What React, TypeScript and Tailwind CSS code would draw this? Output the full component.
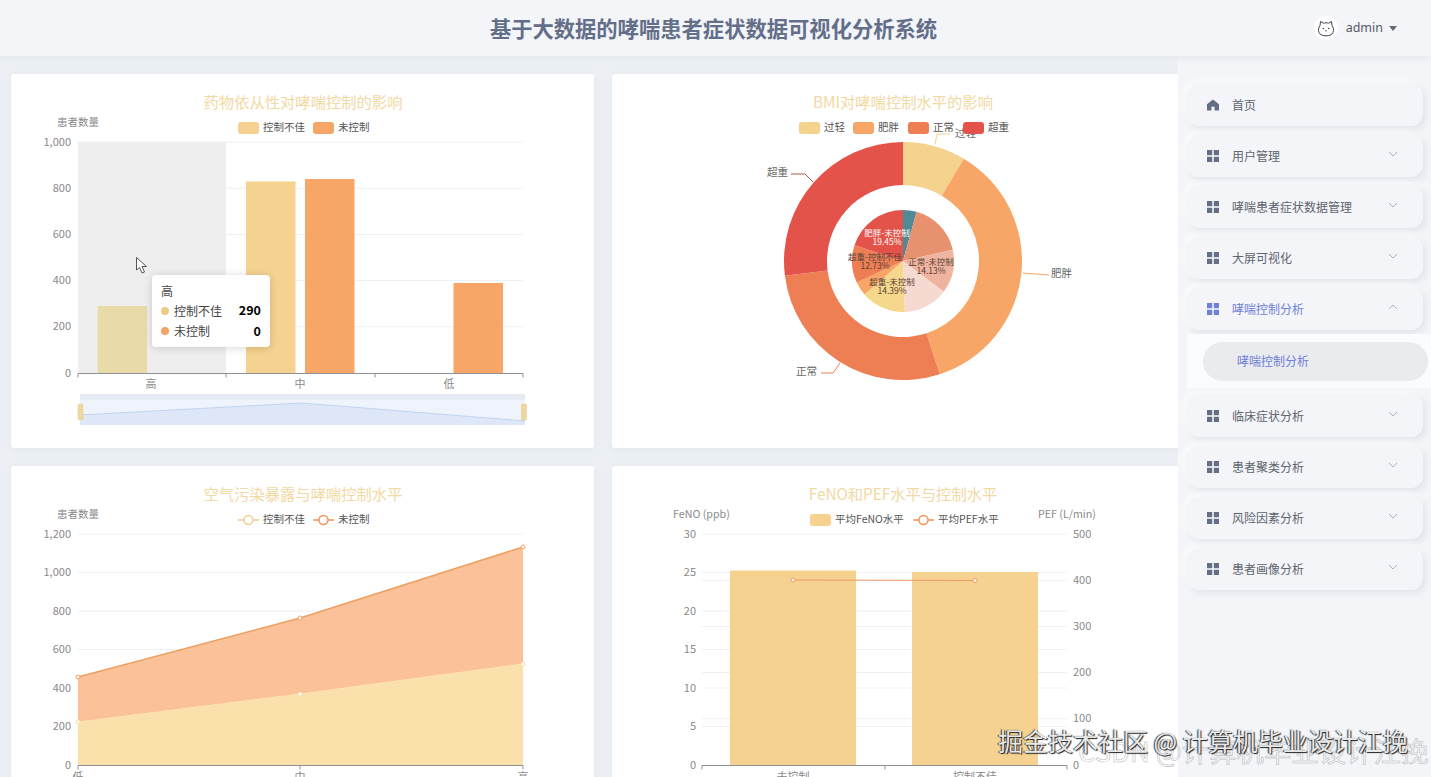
import React from "react";

const GOLD = "#f5d28f";
const ORANGE = "#f8a667";
const CORAL = "#ee7f55";
const RED = "#e4534a";

function xy(cx: number, cy: number, r: number, deg: number): [number, number] {
  const a = ((deg - 90) * Math.PI) / 180;
  return [cx + r * Math.cos(a), cy + r * Math.sin(a)];
}

function slice(cx: number, cy: number, ro: number, ri: number, a0: number, a1: number) {
  const [x0, y0] = xy(cx, cy, ro, a0);
  const [x1, y1] = xy(cx, cy, ro, a1);
  const large = a1 - a0 > 180 ? 1 : 0;
  if (ri === 0) return `M${cx} ${cy}L${x0} ${y0}A${ro} ${ro} 0 ${large} 1 ${x1} ${y1}Z`;
  const [x2, y2] = xy(cx, cy, ri, a1);
  const [x3, y3] = xy(cx, cy, ri, a0);
  return `M${x0} ${y0}A${ro} ${ro} 0 ${large} 1 ${x1} ${y1}L${x2} ${y2}A${ri} ${ri} 0 ${large} 0 ${x3} ${y3}Z`;
}

function T({
  x,
  y,
  children,
  size = 11,
  fill = "#8a8a8a",
  anchor = "start",
}: {
  x: number;
  y: number;
  children: React.ReactNode;
  size?: number;
  fill?: string;
  anchor?: "start" | "middle" | "end";
}) {
  return (
    <text x={x} y={y - 1.4} fontSize={size} fill={fill} textAnchor={anchor} dominantBaseline="central">
      {children}
    </text>
  );
}

function PieLabel({ x, y, name, pct, fill }: { x: number; y: number; name: string; pct: string; fill: string }) {
  return (
    <text x={x} y={y} fontSize={8.5} fill={fill} textAnchor="middle">
      <tspan x={x} y={y}>{name}</tspan>
      <tspan x={x} y={y + 8.5}>{pct}</tspan>
    </text>
  );
}

function Title({ x, y, children }: { x: number; y: number; children: React.ReactNode }) {
  return (
    <T x={x} y={y} size={15.3} fill="#f2d9a3" anchor="middle">
      {children}
    </T>
  );
}

function LegendBox({ x, y, color, label, w = 21 }: { x: number; y: number; color: string; label: string; w?: number }) {
  return (
    <g>
      <rect x={x} y={y - 6} width={w} height={12} rx={3} fill={color} />
      <T x={x + w + 4} y={y} size={10.5} fill="#555">
        {label}
      </T>
    </g>
  );
}

function LegendLine({ x, y, color, label }: { x: number; y: number; color: string; label: string }) {
  return (
    <g>
      <line x1={x} y1={y} x2={x + 21} y2={y} stroke={color} strokeWidth={1.5} />
      <circle cx={x + 10.5} cy={y} r={4.5} fill="#fff" stroke={color} strokeWidth={1.5} />
      <T x={x + 25} y={y} size={10.5} fill="#555">
        {label}
      </T>
    </g>
  );
}

function Grid({ ys, x1, x2 }: { ys: number[]; x1: number; x2: number }) {
  return (
    <g>
      {ys.map((y) => (
        <line key={y} x1={x1} y1={y} x2={x2} y2={y} stroke="#eef0f3" strokeWidth={1} />
      ))}
    </g>
  );
}

function Axis({ y, ticks }: { y: number; ticks: number[] }) {
  return (
    <g stroke="#8d9096" strokeWidth={1}>
      <line x1={ticks[0]} y1={y} x2={ticks[ticks.length - 1]} y2={y} />
      {ticks.map((t) => (
        <line key={t} x1={t} y1={y} x2={t} y2={y + 4} />
      ))}
    </g>
  );
}

function BarChart() {
  const ys = [373, 326.8, 280.6, 234.4, 188.2, 142];
  const labels = ["0", "200", "400", "600", "800", "1,000"];
  return (
    <svg width={583} height={374} viewBox="11 74 583 374" className="block">
      <Title x={303} y={102}>药物依从性对哮喘控制的影响</Title>
      <T x={57} y={123} size={10.5}>患者数量</T>
      <LegendBox x={238} y={128} color={GOLD} label="控制不佳" />
      <LegendBox x={313} y={128} color={ORANGE} label="未控制" />
      <rect x={78} y={142} width={148} height={231} fill="#eeeeee" />
      <Grid ys={ys.slice(1)} x1={78} x2={523} />
      {labels.map((l, i) => (
        <T key={l} x={71} y={ys[i]} anchor="end">{l}</T>
      ))}
      <rect x={97.5} y={306} width={49.5} height={67} fill="#e9dba8" />
      <rect x={246} y={181.5} width={49.5} height={191.5} fill={GOLD} />
      <rect x={305} y={179} width={49.5} height={194} fill={ORANGE} />
      <rect x={453.5} y={283} width={49.5} height={90} fill={ORANGE} />
      <Axis y={373.5} ticks={[78, 226, 375, 523]} />
      <T x={151} y={384} anchor="middle">高</T>
      <T x={300} y={384} anchor="middle">中</T>
      <T x={449} y={384} anchor="middle">低</T>
      <rect x={80} y={394} width={445} height={31} fill="#eef3fc" />
      <rect x={80} y={394} width={445} height={6} fill="#e6ebf4" />
      <path d="M80 415L302 403L525 421V425H80Z" fill="#dde7f8" stroke="none" />
      <path d="M80 415L302 403L525 421" fill="none" stroke="#c3d3ef" strokeWidth={1} />
      <rect x={78} y={404} width={5} height={16} rx={1} fill="#f0d7a0" stroke="#e3c88f" strokeWidth={0.5} />
      <rect x={521.5} y={404} width={5} height={16} rx={1} fill="#f0d7a0" stroke="#e3c88f" strokeWidth={0.5} />
      <path
        d="M136.5 257.5V270L139.5 267.5L142 273L144.5 272L142 266.5H146.5Z"
        fill="#fff"
        stroke="#555"
        strokeWidth={1}
        strokeLinejoin="round"
      />
    </svg>
  );
}

function PieChart() {
  const cx = 903;
  const cy = 261;
  const outer: [number, number, string][] = [
    [0, 30.7, "#f5d38f"],
    [30.7, 162, ORANGE],
    [162, 262.9, CORAL],
    [262.9, 360, RED],
  ];
  const inner: [number, number, string][] = [
    [0, 15.5, "#4f8a96"],
    [15.5, 77.3, "#e8916f"],
    [77.3, 127, "#efb49f"],
    [127, 178, "#f6d9d0"],
    [178, 229, "#f5d88c"],
    [229, 245, ORANGE],
    [245, 288, CORAL],
    [288, 360, RED],
  ];
  const lab = "#5a4338";
  return (
    <svg width={583} height={374} viewBox="612 74 583 374" className="block">
      <Title x={903} y={102}>BMI对哮喘控制水平的影响</Title>
      {outer.map(([a, b, c]) => (
        <path key={a} d={slice(cx, cy, 119, 76, a, b)} fill={c} />
      ))}
      {inner.map(([a, b, c]) => (
        <path key={a} d={slice(cx, cy, 51, 0, a, b)} fill={c} />
      ))}
      <g fill="none" strokeWidth={1}>
        <path d="M935 144L937 134H950" stroke="#f5d38f" />
        <path d="M791 174H805L813 182" stroke="#b5564a" />
        <path d="M1023 273L1049 275" stroke={ORANGE} />
        <path d="M821 373H833L840 363" stroke={CORAL} />
      </g>
      <T x={955} y={134} size={10.5} fill="#666">过轻</T>
      <T x={767} y={173} size={10.5} fill="#666">超重</T>
      <T x={1051} y={274} size={10.5} fill="#666">肥胖</T>
      <T x={796} y={372} size={10.5} fill="#666">正常</T>
      <LegendBox x={799} y={128} color="#f5d38f" label="过轻" />
      <LegendBox x={853} y={128} color={ORANGE} label="肥胖" />
      <LegendBox x={908} y={128} color={CORAL} label="正常" />
      <LegendBox x={963} y={128} color={RED} label="超重" />
      <PieLabel x={887} y={236} name="肥胖-未控制" pct="19.45%" fill="#fff" />
      <PieLabel x={875} y={260} name="超重-控制不佳" pct="12.73%" fill={lab} />
      <PieLabel x={931} y={265} name="正常-未控制" pct="14.13%" fill={lab} />
      <PieLabel x={892} y={285} name="超重-未控制" pct="14.39%" fill={lab} />
    </svg>
  );
}

function AreaChart() {
  const ys = [765, 726.5, 688, 649.5, 611, 572.5, 534];
  const labels = ["0", "200", "400", "600", "800", "1,000", "1,200"];
  return (
    <svg width={583} height={374} viewBox="11 466 583 374" className="block">
      <Title x={303} y={494}>空气污染暴露与哮喘控制水平</Title>
      <T x={57} y={515} size={10.5}>患者数量</T>
      <LegendLine x={238} y={520} color="#f3cd8b" label="控制不佳" />
      <LegendLine x={313} y={520} color="#ee9459" label="未控制" />
      <Grid ys={ys.slice(1)} x1={78} x2={523} />
      {labels.map((l, i) => (
        <T key={l} x={71} y={ys[i]} anchor="end">{l}</T>
      ))}
      <path d="M78 722L300 694L523 664V547L300 618L78 677Z" fill="#fbc299" />
      <path d="M78 765V722L300 694L523 664V765Z" fill="#fae0ab" />
      <path d="M78 677L300 618L523 547" fill="none" stroke="#ef9f60" strokeWidth={1.5} />
      <path d="M78 722L300 694L523 664" fill="none" stroke="#fbe2ae" strokeWidth={1} />
      {[
        [78, 677],
        [300, 618],
        [523, 547],
      ].map(([x, y]) => (
        <circle key={x} cx={x} cy={y} r={2} fill="#fff" stroke="#ef9f60" strokeWidth={1} />
      ))}
      {[
        [78, 722],
        [300, 694],
        [523, 664],
      ].map(([x, y]) => (
        <circle key={x} cx={x} cy={y} r={2} fill="#fff" stroke="#f8dc9f" strokeWidth={1} />
      ))}
      <Axis y={765.5} ticks={[78, 300, 523]} />
      <T x={78} y={777} anchor="middle">低</T>
      <T x={300} y={777} anchor="middle">中</T>
      <T x={523} y={777} anchor="middle">高</T>
    </svg>
  );
}

function ComboChart() {
  const ys = [765, 726.5, 688, 649.5, 611, 572.5, 534];
  const rs = [765, 718.8, 672.6, 626.4, 580.2, 534];
  return (
    <svg width={583} height={374} viewBox="612 466 583 374" className="block">
      <Title x={903} y={494}>FeNO和PEF水平与控制水平</Title>
      <T x={673} y={515} size={10.7}>FeNO (ppb)</T>
      <T x={1038} y={515} size={10.7}>PEF (L/min)</T>
      <LegendBox x={810} y={520} color={GOLD} label="平均FeNO水平" />
      <LegendLine x={913} y={520} color="#ee9459" label="平均PEF水平" />
      <Grid ys={[...ys.slice(1), ...rs.slice(1, 5)]} x1={702} x2={1067} />
      {ys.map((y, i) => (
        <T key={y} x={696} y={y} anchor="end">{i * 5}</T>
      ))}
      {rs.map((y, i) => (
        <T key={y} x={1073} y={y}>{i * 100}</T>
      ))}
      <rect x={730} y={570.5} width={126} height={194.5} fill={GOLD} />
      <rect x={912} y={572} width={126} height={193} fill={GOLD} />
      <path d="M793 580L975 580.5" fill="none" stroke="#ee9a6a" strokeWidth={1.2} />
      <circle cx={793} cy={580} r={2} fill="#fff" stroke="#ee9a6a" />
      <circle cx={975} cy={580.5} r={2} fill="#fff" stroke="#ee9a6a" />
      <Axis y={765.5} ticks={[702, 885, 1067]} />
      <T x={793} y={777} anchor="middle">未控制</T>
      <T x={975} y={777} anchor="middle">控制不佳</T>
    </svg>
  );
}

function Card({ children }: { children: React.ReactNode }) {
  return (
    <div className="relative h-[374px] w-[583px] overflow-hidden rounded-[3px] bg-white shadow-[0_1px_6px_#e2e6ec]">
      {children}
    </div>
  );
}

function Tooltip() {
  return (
    <div className="absolute left-[141px] top-[201px] h-[72px] w-[118px] rounded-[4px] bg-white px-[9px] pt-[6px] text-[12px] text-[#444] shadow-[0_1px_8px_rgba(0,0,0,0.16)]">
      <div className="h-[19px] leading-[19px]">高</div>
      <div className="flex h-[21px] items-center">
        <span className="mr-[5px] h-2 w-2 rounded-full bg-[#eccb84]" />
        <span className="flex-1">控制不佳</span>
        <span className="text-[12.5px] font-bold text-black">290</span>
      </div>
      <div className="flex h-[20px] items-center">
        <span className="mr-[5px] h-2 w-2 rounded-full bg-[#f3a465]" />
        <span className="flex-1">未控制</span>
        <span className="text-[12.5px] font-bold text-black">0</span>
      </div>
    </div>
  );
}

function GridIcon({ active }: { active?: boolean }) {
  return (
    <svg width={12} height={12} viewBox="0 0 12 12" fill={active ? "#6f80d8" : "#666e85"} className="shrink-0">
      <rect x={0} y={0} width={5.2} height={5.2} />
      <rect x={6.8} y={0} width={5.2} height={5.2} />
      <rect x={0} y={6.8} width={5.2} height={5.2} />
      <rect x={6.8} y={6.8} width={5.2} height={5.2} />
    </svg>
  );
}

function HomeIcon() {
  return (
    <svg width={12} height={12} viewBox="0 0 13 12" fill="#666e85" className="shrink-0">
      <path d="M6.5 0L13 5.2V12H8.2V8H4.8V12H0V5.2Z" />
    </svg>
  );
}

function Chevron({ up, active }: { up?: boolean; active?: boolean }) {
  return (
    <svg width={10} height={6} viewBox="0 0 10 6" fill="none" stroke={active ? "#a9aec0" : "#a5a9b2"} strokeWidth={0.9} className="mb-[4px]">
      <path d={up ? "M1 5L5 1L9 5" : "M1 1L5 5L9 1"} />
    </svg>
  );
}

function NavItem({
  label,
  home,
  chevron = true,
  active,
  mt = "mt-[9px]",
}: {
  label: string;
  home?: boolean;
  chevron?: boolean;
  active?: boolean;
  mt?: string;
}) {
  return (
    <div
      className={`${mt} flex h-[42px] w-[236px] items-center rounded-[12px] bg-[#f3f5f8] pl-5 pr-[25px] shadow-[3px_3px_7px_#e0e3e9,-3px_-3px_7px_#fbfcfd] ${
        active ? "text-[#6f80d8]" : "text-[#60646e]"
      }`}
    >
      {home ? <HomeIcon /> : <GridIcon active={active} />}
      <span className="ml-[13px] flex-1 text-xs">{label}</span>
      {chevron && <Chevron up={active} active={active} />}
    </div>
  );
}

function CatAvatar() {
  return (
    <div className="flex h-6 w-6 items-center justify-center rounded-full bg-white">
      <svg width={18} height={17} viewBox="0 0 18 17" fill="#fff" stroke="#444" strokeWidth={1}>
        <path d="M3 5.5L3.5 1.5L6.5 3.2C8 2.7 10 2.7 11.5 3.2L14.5 1.5L15 5.5C16.5 7.5 17 10 16 12.5C15 15 12 15.8 9 15.8C6 15.8 3 15 2 12.5C1 10 1.5 7.5 3 5.5Z" />
        <circle cx={6.3} cy={8.5} r={0.8} fill="#444" stroke="none" />
        <circle cx={11.7} cy={8.5} r={0.8} fill="#444" stroke="none" />
        <path d="M8 10.5Q9 11.5 10 10.5" fill="none" strokeWidth={0.8} />
      </svg>
    </div>
  );
}

export default function App() {
  return (
    <div className="relative flex h-screen w-full flex-col overflow-hidden bg-[#ecf0f5] font-['Noto_Sans_CJK_SC','Noto_Sans',sans-serif]">
      <header className="z-10 grid h-14 shrink-0 grid-cols-[1fr_auto_1fr] items-center bg-[#f3f5f8] shadow-[0_2px_6px_#e4e7ec]">
        <div />
        <h1 className="-ml-1 text-[21.3px] font-bold text-[#636f89]">基于大数据的哮喘患者症状数据可视化分析系统</h1>
        <div className="flex items-center justify-end pr-[34px]">
          <CatAvatar />
          <span className="ml-[8px] font-['Noto_Sans',sans-serif] text-[12.5px] text-[#555a66]">admin</span>
          <span className="ml-[6px] h-0 w-0 border-x-[4px] border-t-[5px] border-x-transparent border-t-[#666a75]" />
        </div>
      </header>
      <div className="flex min-h-0 flex-1">
        <main className="min-w-0 flex-1 overflow-hidden pl-[11px] pt-[18px]">
          <div className="grid w-[1184px] grid-cols-[583px_583px] gap-[18px]">
            <Card>
              <BarChart />
              <Tooltip />
            </Card>
            <Card>
              <PieChart />
            </Card>
            <Card>
              <AreaChart />
            </Card>
            <Card>
              <ComboChart />
            </Card>
          </div>
        </main>
        <aside className="w-[253px] shrink-0 bg-[#f3f5f8] pl-[9px] pt-[28px]">
          <NavItem label="首页" home chevron={false} mt="mt-0" />
          <NavItem label="用户管理" />
          <NavItem label="哮喘患者症状数据管理" />
          <NavItem label="大屏可视化" />
          <NavItem label="哮喘控制分析" active />
          <div className="mt-[4px] h-[54px] bg-[#fbfcfd] pl-4 pr-[3px] pt-2">
            <div className="flex h-[39px] items-center rounded-[20px] bg-[#e9ebee] pb-[2px] pl-[34px] text-xs text-[#6f80d8]">
              哮喘控制分析
            </div>
          </div>
          <NavItem label="临床症状分析" mt="mt-[7px]" />
          <NavItem label="患者聚类分析" />
          <NavItem label="风险因素分析" />
          <NavItem label="患者画像分析" />
        </aside>
      </div>
      <div className="pointer-events-none absolute left-[1078px] top-[732px] whitespace-nowrap text-[27.4px] leading-[36px] text-transparent [-webkit-text-stroke:0.6px_#bcbec2]">
        CSDN @计算机毕业设计江挽
      </div>
      <div className="pointer-events-none absolute left-[998px] top-[723px] whitespace-nowrap text-[25px] leading-[34px] text-[#e8e8e8] [text-shadow:1px_1px_1px_#222,-1px_0_1px_#333]">
        掘金技术社区 @ 计算机毕业设计江挽
      </div>
    </div>
  );
}
